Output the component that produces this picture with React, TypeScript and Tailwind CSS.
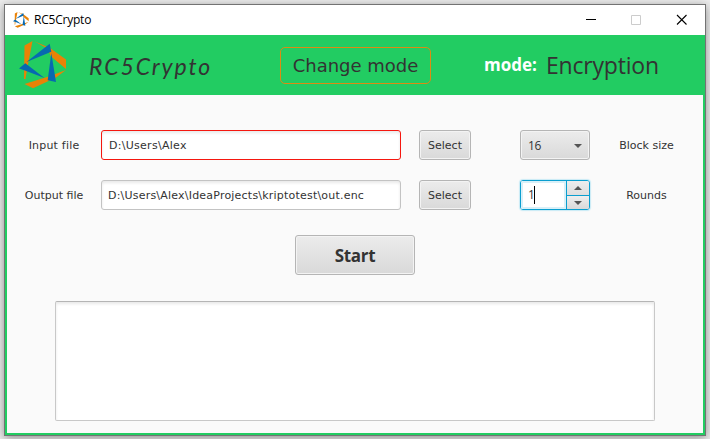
import React from 'react';

function Logo({ className }: { className: string }) {
  return (
    <svg viewBox="0 0 48 48" className={className}>
      <g fill="#e98206">
        <path d="M5.5 4.5 13.5 0 8.3 27 6.5 38 5 38z" />
        <path d="M15.3 .3 31 7 47 18.5V28L31.5 15 29 8z" />
        <path d="M47 29 37 36.5 14 47.3 5.5 43 28 36 35 33.5z" />
      </g>
      <g fill="#0769b1">
        <path d="M30.7 2.7 32.3 10.8 7.5 21z" />
        <path d="M32.3 12 37 41 28.7 39.3z" />
        <path d="M0 27.5 6.3 22.3 25.5 37 6 29.6z" />
      </g>
    </svg>
  );
}

const field =
  'h-[30px] w-[300px] rounded-[3px] border bg-white shadow-[inset_0_2px_3px_#e9e9e9] flex items-center whitespace-nowrap pt-px';
const button =
  'rounded-[3px] border border-[#b5b5b5] bg-linear-to-b from-[#ececec] to-[#d9d9d9] shadow-[inset_0_0_0_1px_#f3f3f3] flex items-center justify-center pt-px';

function Label({ children, className }: { children: string; className: string }) {
  return <div className={`whitespace-nowrap pt-px text-center ${className}`}>{children}</div>;
}

export default function App() {
  return (
    <div className="h-[439px] w-[710px] overflow-hidden bg-[#ececec] pl-1 pt-1 font-['DejaVu_Sans',sans-serif] text-[11px] leading-[14px] text-[#333333]">
      <div className="flex h-[432px] w-[702px] flex-col border border-[#737373] bg-[#22cc62] shadow-[0_2px_9px_rgba(0,0,0,0.4)]">
        <div className="flex h-[30px] shrink-0 items-center bg-white pl-2 font-['Open_Sans','Noto_Sans',sans-serif] text-[12px] text-black">
          <Logo className="h-4 w-4" />
          <span className="ml-[5px] w-[59px] whitespace-nowrap tracking-[-0.22px]">RC5Crypto</span>
          <svg className="ml-[493px] h-3 w-[106px]" viewBox="0 0 106 12" fill="none">
            <path d="M0 5.5h10" stroke="#000" />
            <path d="M45.5 1.5h9v9h-9z" stroke="#ccc" />
            <path d="m91 1 9.5 9.5m0-9.5L91 10.500" stroke="#000" strokeWidth="1.1" />
          </svg>
        </div>
        <header className="flex h-[60px] shrink-0 items-center">
          <Logo className="ml-[14px] h-12 w-12" />
          <div className="ml-[22px] w-[191px] whitespace-nowrap font-['Lato',sans-serif] text-[23px] italic leading-8 tracking-[1.9px] pt-px">
            RC5Crypto
          </div>
          <div className="flex h-[37px] w-[151px] items-center justify-center whitespace-nowrap rounded-[5px] border border-[#dc8b13] pt-px text-[18px]">
            Change mode
          </div>
          <div className="ml-[53px] w-[62px] whitespace-nowrap font-['Open_Sans','Noto_Sans',sans-serif] text-[17px] font-bold leading-6 text-white">
            mode:
          </div>
          <div className="whitespace-nowrap font-['Open_Sans','Noto_Sans',sans-serif] text-[23px] leading-8 tracking-[-0.2px]">
            Encryption
          </div>
        </header>
        <main className="mx-0.5 mb-0.5 flex grow flex-col bg-[#fafafa] pt-[35px]">
          <div className="flex h-[30px] items-center">
            <Label className="w-[94px] tracking-[0.2px]">Input file</Label>
            <div className={`${field} border-[#f5170f] pl-[7px] tracking-[0.28px]`}>D:\Users\Alex</div>
            <div className={`${button} ml-[18px] h-[30px] w-[52px]`}>Select</div>
            <div className={`${button} ml-[49px] h-[30px] w-[70px] font-['Open_Sans','Noto_Sans',sans-serif] text-[12px]`}>
              <span className="mr-[33px] tracking-[-0.3px]">16</span>
              <svg className="h-1 w-2" viewBox="0 0 8 4"><path d="M0 0h8L4 4z" fill="#555" /></svg>
            </div>
            <Label className="w-[113px]">Block size</Label>
          </div>
          <div className="mt-5 flex h-[30px] items-center">
            <Label className="w-[94px]">Output file</Label>
            <div className={`${field} border-[#c3c3c3] pl-[6px] tracking-[0.21px]`}>D:\Users\Alex\IdeaProjects\kriptotest\out.enc</div>
            <div className={`${button} ml-[18px] h-[30px] w-[52px]`}>Select</div>
            <div className="ml-[49px] flex h-[30px] w-[70px] overflow-hidden rounded-[3px] border border-[#0b9ecf] shadow-[0_0_1px_1px_#c8eaf5]">
              <div className="flex w-[45px] items-center bg-white pl-[7px] font-['Open_Sans','Noto_Sans',sans-serif] text-[12px] shadow-[inset_0_0_0_2px_#d9f0f8]">
                1<span className="-ml-px h-[18px] w-px bg-black" />
              </div>
              <div className="flex w-[23px] flex-col border-l border-[#0b9ecf]">
                <div className="flex h-[15px] items-center justify-center border-b border-[#0b9ecf] bg-linear-to-b from-[#eee] to-[#dedede]">
                  <svg className="h-1 w-2" viewBox="0 0 8 4"><path d="M0 4h8L4 0z" fill="#555" /></svg>
                </div>
                <div className="flex h-[13px] items-center justify-center bg-linear-to-b from-[#eee] to-[#d9d9d9]">
                  <svg className="h-1 w-2" viewBox="0 0 8 4"><path d="M0 0h8L4 4z" fill="#555" /></svg>
                </div>
              </div>
            </div>
            <Label className="w-[113px]">Rounds</Label>
          </div>
          <div className={`${button} ml-[288px] mt-[25px] h-10 w-[120px] font-['Open_Sans','Noto_Sans',sans-serif] text-[17px] font-bold tracking-[-0.3px]`}>
            Start
          </div>
          <div className="ml-[48px] mt-[26px] h-[120px] w-[600px] rounded-[2px] border border-[#c8c8c8] border-t-[#b5b5b5] bg-white shadow-[inset_0_2px_3px_#e9e9e9]" />
        </main>
      </div>
    </div>
  );
}
